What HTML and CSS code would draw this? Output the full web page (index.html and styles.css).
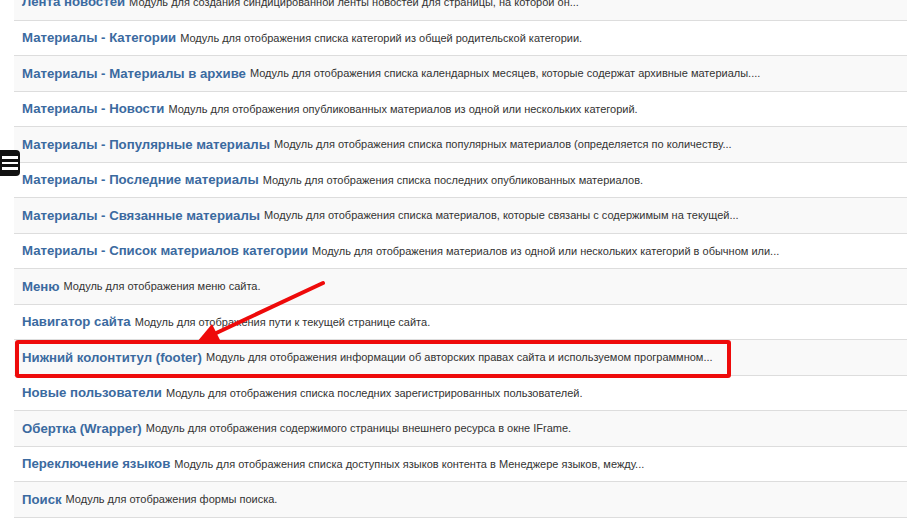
FILE: index.html
```html
<!DOCTYPE html>
<html lang="ru">
<head>
<meta charset="utf-8">
<title>Модули</title>
<link rel="stylesheet" href="styles.css">
</head>
<body>
<div class="page">
  <ul class="modules">
    <li class="row"><a class="title">Лента новостей</a> <span class="desc">Модуль для создания синдицированной ленты новостей для страницы, на которой он...</span></li>
    <li class="row"><a class="title">Материалы - Категории</a> <span class="desc">Модуль для отображения списка категорий из общей родительской категории.</span></li>
    <li class="row"><a class="title">Материалы - Материалы в архиве</a> <span class="desc">Модуль для отображения списка календарных месяцев, которые содержат архивные материалы....</span></li>
    <li class="row"><a class="title">Материалы - Новости</a> <span class="desc">Модуль для отображения опубликованных материалов из одной или нескольких категорий.</span></li>
    <li class="row"><a class="title">Материалы - Популярные материалы</a> <span class="desc">Модуль для отображения списка популярных материалов (определяется по количеству...</span></li>
    <li class="row"><a class="title">Материалы - Последние материалы</a> <span class="desc">Модуль для отображения списка последних опубликованных материалов.</span></li>
    <li class="row"><a class="title">Материалы - Связанные материалы</a> <span class="desc">Модуль для отображения списка материалов, которые связаны с содержимым на текущей...</span></li>
    <li class="row"><a class="title">Материалы - Список материалов категории</a> <span class="desc">Модуль для отображения материалов из одной или нескольких категорий в обычном или...</span></li>
    <li class="row"><a class="title">Меню</a> <span class="desc">Модуль для отображения меню сайта.</span></li>
    <li class="row"><a class="title">Навигатор сайта</a> <span class="desc">Модуль для отображения пути к текущей странице сайта.</span></li>
    <li class="row highlighted"><a class="title">Нижний колонтитул (footer)</a> <span class="desc">Модуль для отображения информации об авторских правах сайта и используемом программном...</span></li>
    <li class="row"><a class="title">Новые пользователи</a> <span class="desc">Модуль для отображения списка последних зарегистрированных пользователей.</span></li>
    <li class="row"><a class="title">Обертка (Wrapper)</a> <span class="desc">Модуль для отображения содержимого страницы внешнего ресурса в окне IFrame.</span></li>
    <li class="row"><a class="title">Переключение языков</a> <span class="desc">Модуль для отображения списка доступных языков контента в Менеджере языков, между...</span></li>
    <li class="row"><a class="title">Поиск</a> <span class="desc">Модуль для отображения формы поиска.</span></li>
  </ul>

  <button class="menu-toggle" aria-label="Меню">
    <span class="bar"></span><span class="bar"></span><span class="bar"></span>
  </button>

  <svg class="arrow" width="907" height="528" viewBox="0 0 907 528">
    <line x1="323" y1="283" x2="212" y2="335" stroke="#ee0a0a" stroke-width="4" stroke-linecap="round"/>
    <polygon points="197,342 212,324 220,340" fill="#ee0a0a"/>
  </svg>
</div>
</body>
</html>
```

FILE: styles.css
```css
html, body {
  margin: 0;
  padding: 0;
  background: #ffffff;
}

.page {
  position: relative;
  width: 907px;
  height: 528px;
  overflow: hidden;
  font-family: "Liberation Sans", Arial, sans-serif;
}

.modules {
  list-style: none;
  margin: -16px 0 0 14px;
  padding: 0;
  border-bottom: 1px solid #dddddd;
}

.row {
  box-sizing: border-box;
  height: 35.5px;
  display: flex;
  align-items: center;
  padding: 0 8px;
  border-top: 1px solid #dddddd;
  white-space: nowrap;
  background: #ffffff;
  position: relative;
}

.row:nth-child(odd) {
  background: #f9f9f9;
}

.row:first-child {
  border-top: none;
}

.title {
  color: #3b6aa0;
  font-weight: bold;
  font-size: 13.2px;
  margin-right: 4px;
}

.desc {
  color: #333333;
  font-size: 11px;
}

.highlighted {
  z-index: 2;
}

.highlighted::after {
  content: "";
  position: absolute;
  left: 1px;
  top: 0;
  width: 716px;
  height: 38px;
  box-sizing: border-box;
  border: 4px solid #ee0a0a;
  border-radius: 3px;
}

.menu-toggle {
  position: absolute;
  left: 0;
  top: 150px;
  width: 20px;
  height: 26px;
  padding: 0 2px;
  margin: 0;
  border: none;
  border-radius: 0 4px 4px 0;
  background: #111111;
  display: flex;
  flex-direction: column;
  justify-content: center;
  gap: 3px;
  box-sizing: border-box;
}

.menu-toggle .bar {
  display: block;
  height: 2.5px;
  width: 100%;
  background: #ffffff;
}

.arrow {
  position: absolute;
  left: 0;
  top: 0;
  z-index: 3;
  pointer-events: none;
}
```
